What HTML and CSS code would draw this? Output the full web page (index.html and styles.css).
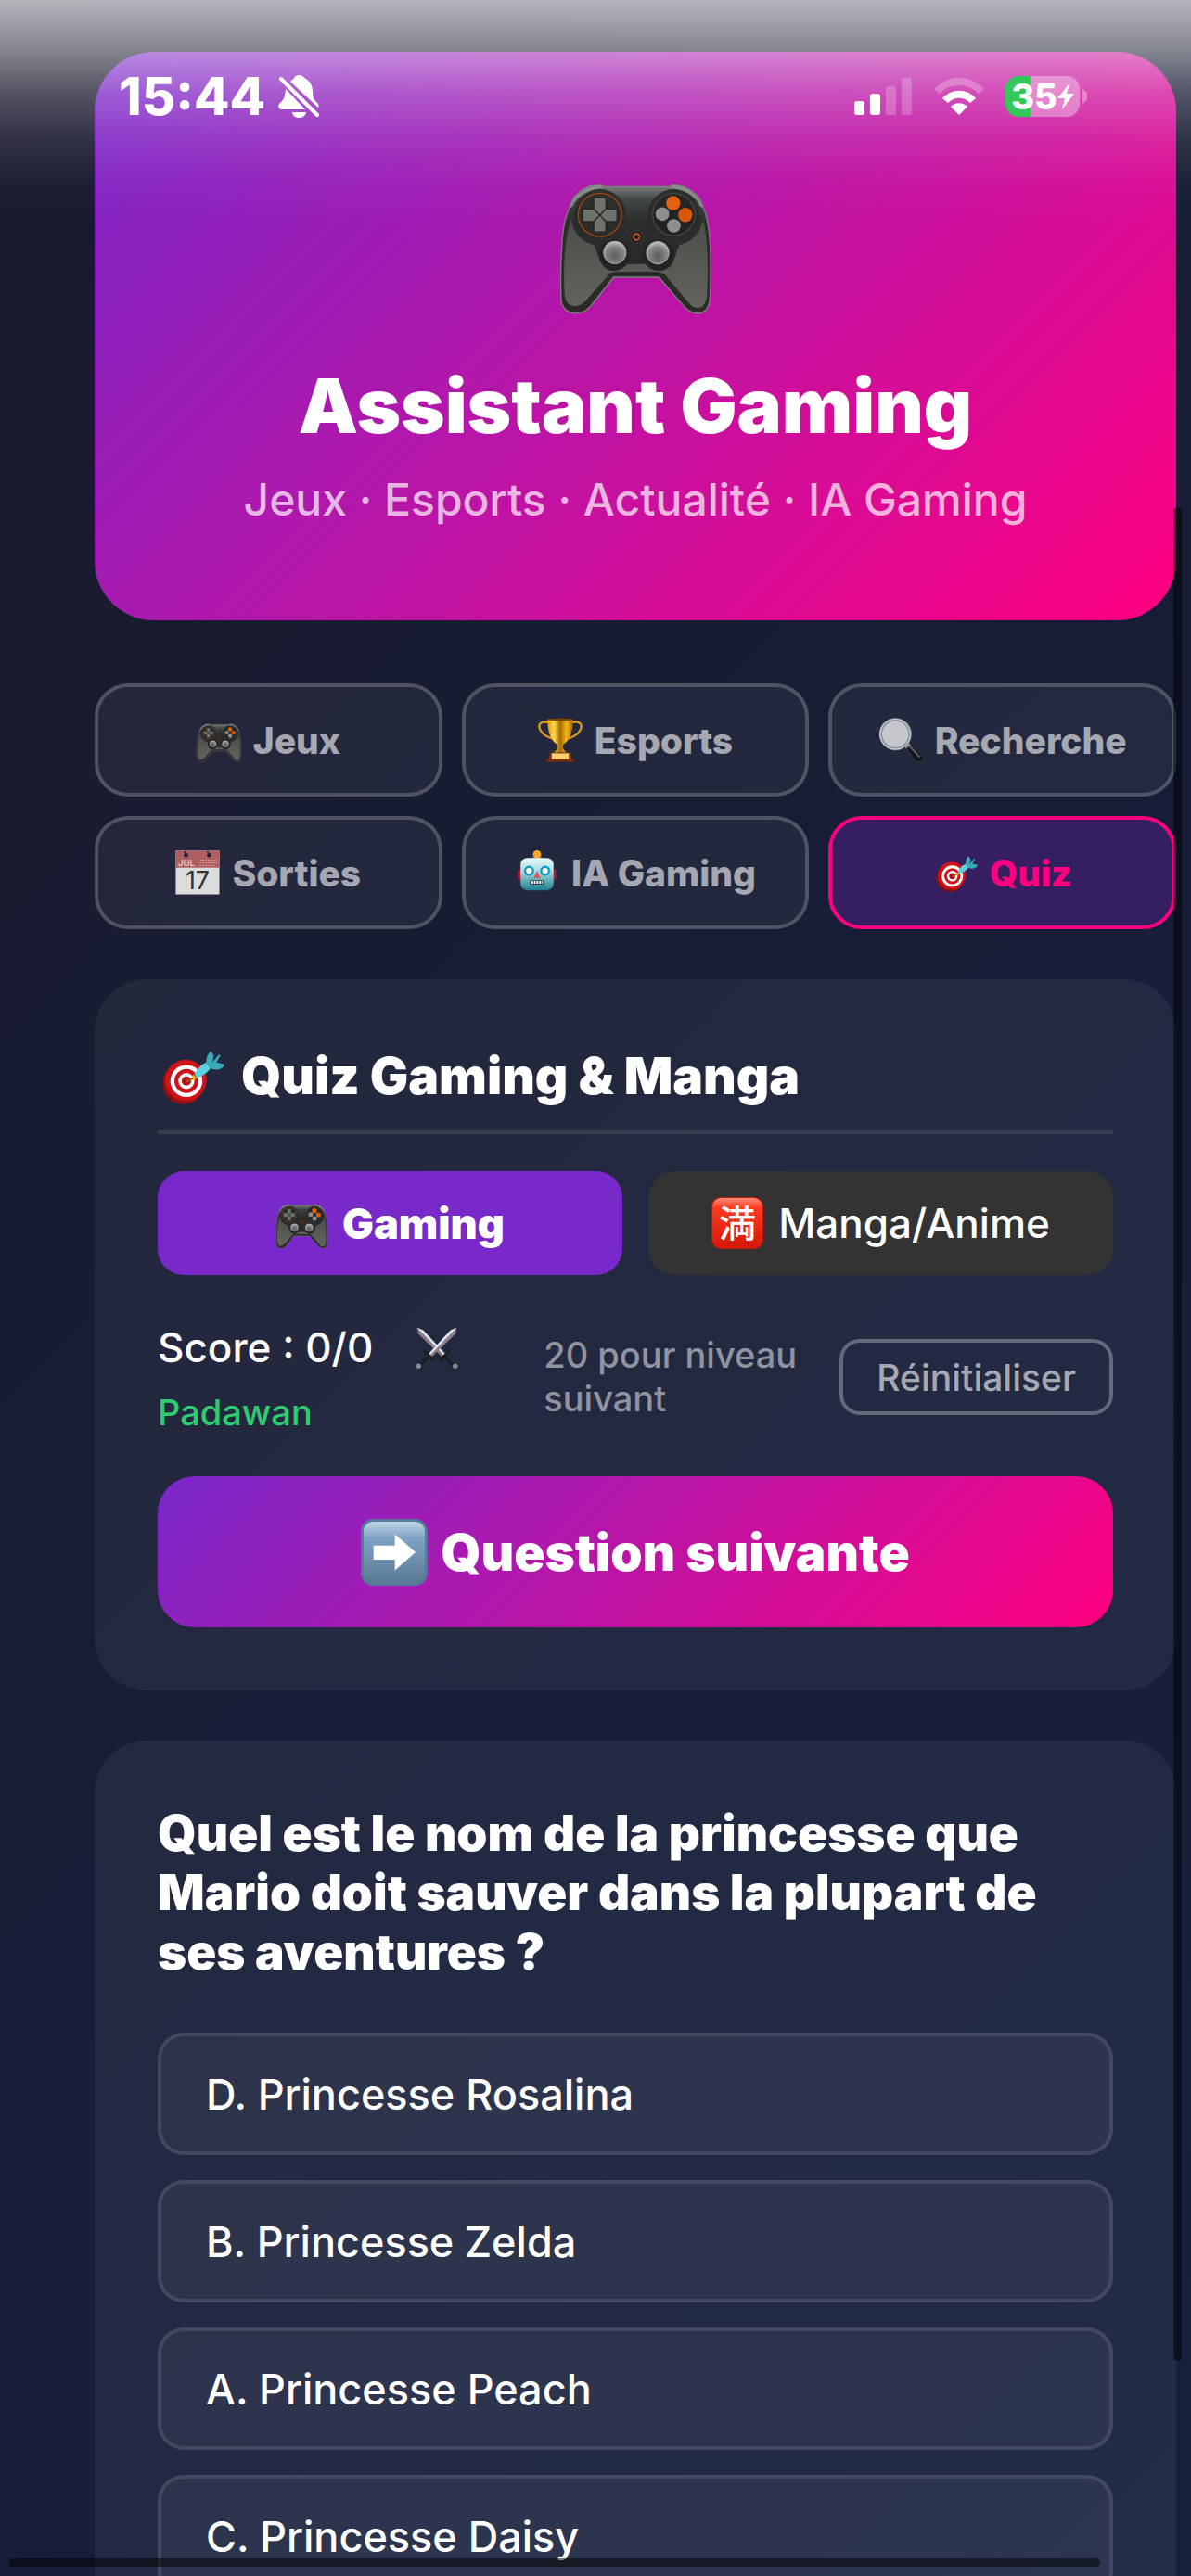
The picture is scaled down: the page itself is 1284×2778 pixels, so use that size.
FILE: index.html
```html
<!DOCTYPE html>
<html lang="fr">
<head>
    <meta charset="UTF-8">
    <meta name="viewport" content="width=device-width, initial-scale=1.0">
    <title>Assistant Gaming</title>
    <link rel="stylesheet" href="styles.css">
</head>
<body>
    <!-- Shared icons -->
    <svg class="sprite" aria-hidden="true">
        <defs>
            <linearGradient id="padBody" x1="0" y1="0" x2="0" y2="1">
                <stop offset="0" stop-color="#7c8480"/>
                <stop offset="0.12" stop-color="#3f4444"/>
                <stop offset="0.3" stop-color="#2b2c2b"/>
                <stop offset="1" stop-color="#2a2b28"/>
            </linearGradient>
            <linearGradient id="padGrip" x1="0" y1="0" x2="0" y2="1">
                <stop offset="0" stop-color="#4b4d48"/>
                <stop offset="1" stop-color="#63645e"/>
            </linearGradient>
            <radialGradient id="padStick" cx="0.5" cy="0.65" r="0.6">
                <stop offset="0" stop-color="#585c5b"/>
                <stop offset="0.7" stop-color="#858887"/>
                <stop offset="1" stop-color="#b8bab8"/>
            </radialGradient>
            <linearGradient id="gold" x1="0" y1="0" x2="1" y2="0">
                <stop offset="0" stop-color="#e09a00"/>
                <stop offset="0.25" stop-color="#ffd84f"/>
                <stop offset="0.5" stop-color="#a66a00"/>
                <stop offset="0.75" stop-color="#f2b51c"/>
                <stop offset="1" stop-color="#a86a00"/>
            </linearGradient>
            <linearGradient id="robotFace" x1="0" y1="0" x2="0" y2="1">
                <stop offset="0" stop-color="#e4fbfb"/>
                <stop offset="0.4" stop-color="#a9dde0"/>
                <stop offset="1" stop-color="#1d7f8e"/>
            </linearGradient>
            <linearGradient id="redBadge" x1="0" y1="0" x2="0" y2="1">
                <stop offset="0" stop-color="#ff8f7d"/>
                <stop offset="0.2" stop-color="#fc3a22"/>
                <stop offset="1" stop-color="#d41708"/>
            </linearGradient>
            <linearGradient id="blueBadge" x1="0" y1="0" x2="0" y2="1">
                <stop offset="0" stop-color="#c8d8e6"/>
                <stop offset="0.28" stop-color="#7ea3c5"/>
                <stop offset="1" stop-color="#5a7993"/>
            </linearGradient>
        </defs>

        <symbol id="icon-gamepad" viewBox="0 0 100 100">
            <g transform="translate(0 13) scale(.204) translate(-65 -50)">
                <path d="M97 132 C105 88 145 58 198 54 L205 62 H422 L428 54 C482 60 520 88 530 132 C546 170 553 240 552 300 C552 350 553 400 549 432 C544 465 520 474 500 469 C482 465 470 452 458 438 L386 354 H240 L170 442 C155 462 135 472 112 470 C88 467 72 450 71 425 C68 370 70 300 74 240 C77 190 84 160 97 132 Z" fill="url(#padBody)" stroke="#7d7f7a" stroke-width="4"/>
                <path d="M103 165 C110 220 150 245 178 250 C188 275 190 295 205 315 C220 338 250 340 282 312 H348 C375 340 410 338 428 312 C440 290 440 275 452 250 C490 240 520 215 528 165 C544 230 545 330 541 410 C538 450 515 462 490 445 L405 345 C395 338 388 336 380 336 H248 C240 336 232 338 225 345 L150 430 C120 458 85 450 82 410 C78 330 80 235 103 165 Z" fill="url(#padGrip)"/>
                <path d="M99 130 C108 90 148 62 198 56 L203 66 C155 72 118 95 108 125 Z M528 130 C518 90 480 62 430 56 L424 66 C472 72 508 95 518 125 Z" fill="#858b88"/>
                <circle cx="196" cy="154" r="84" fill="#2a2c2b"/>
                <circle cx="434" cy="154" r="84" fill="#2a2c2b"/>
                <circle cx="196" cy="153" r="70" fill="#2c2d2b" stroke="#9c4515" stroke-width="4"/>
                <circle cx="434" cy="152" r="68" fill="#222322" stroke="#454746" stroke-width="4"/>
                <path d="M176 98 H215 V134 L196 154 L176 134 Z M176 208 H215 V174 L196 154 L176 174 Z M140 134 H176 L196 154 L176 174 H140 Z M251 134 H215 L196 154 L215 174 H251 Z" fill="#6d726b" stroke="#242523" stroke-width="4"/>
                <circle cx="432" cy="115" r="23" fill="#e2610c"/>
                <circle cx="471" cy="153" r="23" fill="#d95609"/>
                <circle cx="397" cy="150" r="22" fill="#8f8f90"/>
                <circle cx="434" cy="188" r="22" fill="#8f8f90"/>
                <circle cx="314" cy="224" r="20" fill="#1d1e1d" stroke="#3b3d3c" stroke-width="3"/>
                <circle cx="314" cy="224" r="10" fill="none" stroke="#d0561a" stroke-width="5"/>
                <circle cx="243" cy="282" r="50" fill="#232422"/>
                <circle cx="383" cy="282" r="50" fill="#232422"/>
                <circle cx="244" cy="274" r="36" fill="url(#padStick)" stroke="#a5a8a6" stroke-width="3"/>
                <circle cx="382" cy="275" r="36" fill="url(#padStick)" stroke="#a5a8a6" stroke-width="3"/>
            </g>
        </symbol>

        <symbol id="icon-trophy" viewBox="0 0 100 100">
            <path d="M28 12 C6 4 -4 16 8 32 C15 42 24 44 33 47 M72 12 C94 4 104 16 92 32 C85 42 76 44 67 47" fill="none" stroke="#d99a1c" stroke-width="5"/>
            <path d="M22 3 H78 C80 32 70 52 57 60 C54 66 56 72 64 78 H36 C44 72 46 66 43 60 C30 52 20 32 22 3 Z" fill="url(#gold)"/>
            <ellipse cx="50" cy="4" rx="28" ry="3" fill="#7a4a00"/>
            <path d="M28 78 H72 L76 95 H24 Z" fill="#8c3a0a"/>
            <rect x="31" y="80" width="38" height="13" fill="#ffcf6e"/>
            <path d="M20 93 H80 L83 99 H17 Z" fill="#7a2a06"/>
        </symbol>

        <symbol id="icon-search" viewBox="0 0 100 100">
            <path d="M60 62 L70 56 L98 88 C99 95 92 99 86 97 Z" fill="#111214"/>
            <path d="M66 63 L70 60 L94 87 L91 90 Z" fill="#5b5e62"/>
            <path d="M56 62 L66 53 L73 61 L62 70 Z" fill="#8b8e92"/>
            <circle cx="38" cy="37" r="33" fill="#c5c7cd" stroke="#8a9099" stroke-width="7"/>
            <circle cx="38" cy="37" r="34" fill="none" stroke="#d8dce2" stroke-width="2"/>
        </symbol>

        <symbol id="icon-robot" viewBox="0 0 100 100">
            <path d="M42 8 H58 L62 20 H38 Z" fill="#6a4b8c"/>
            <circle cx="50" cy="9" r="9" fill="#fbaa1e"/>
            <rect x="7" y="42" width="10" height="25" rx="4" fill="#b3152a"/>
            <rect x="83" y="42" width="10" height="25" rx="4" fill="#b3152a"/>
            <rect x="13" y="17" width="74" height="73" rx="15" fill="url(#robotFace)"/>
            <circle cx="32" cy="46" r="9" fill="#fff" stroke="#129ac4" stroke-width="5"/>
            <circle cx="68" cy="46" r="9" fill="#fff" stroke="#129ac4" stroke-width="5"/>
            <path d="M50 46 L57 62 H43 Z" fill="#e8504d"/>
            <rect x="34" y="67" width="32" height="10" rx="3" fill="#263b40"/>
            <path d="M37 72 H63" stroke="#fff" stroke-width="6" stroke-dasharray="4 2"/>
        </symbol>

        <symbol id="icon-target" viewBox="0 0 100 100">
            <ellipse cx="38" cy="62" rx="31" ry="31" fill="#8e0f14"/>
            <path d="M22 37 L14 44 L50 91 L62 82 Z" fill="#9f1016"/>
            <ellipse cx="42" cy="57" rx="31" ry="31" fill="#d01219"/>
            <ellipse cx="43" cy="58" rx="24" ry="24" fill="#fff"/>
            <ellipse cx="43" cy="58" rx="18" ry="18" fill="#d01219"/>
            <ellipse cx="43" cy="58" rx="12" ry="12" fill="#fff"/>
            <ellipse cx="43" cy="58" rx="7" ry="7" fill="#b01117"/>
            <path d="M43 59 L60 50" stroke="#9a5b0c" stroke-width="3"/>
            <path d="M53 48 L59 54 L52 57 Z" fill="#f0b412"/>
            <path d="M55 48 C60 38 68 31 75 30 L80 37 C76 45 66 51 59 53 Z" fill="#5ad0dc"/>
            <path d="M73 32 C72 24 75 17 80 13 L84 20 L82 30 L92 18 L94 20 L88 30 L100 33 C99 39 91 44 78 39 Z" fill="#37aab6"/>
        </symbol>

        <symbol id="icon-swords" viewBox="0 0 100 100">
            <path d="M4 4 L18 10 L74 70 L66 76 L6 18 Z" fill="#8d7c80"/>
            <path d="M4 4 L18 10 L74 70 L70 73 Z" fill="#d4e8f4"/>
            <path d="M96 4 L82 10 L26 70 L34 76 L94 18 Z" fill="#8d7c80"/>
            <path d="M96 4 L82 10 L26 70 L30 73 Z" fill="#d4e8f4"/>
            <path d="M20 58 L42 80 M80 58 L58 80 M30 72 L9 94 M70 72 L91 94" stroke="#1c1d20" stroke-width="7"/>
            <circle cx="7" cy="94" r="6" fill="#8b8790"/>
            <circle cx="93" cy="94" r="6" fill="#8b8790"/>
        </symbol>

        <symbol id="icon-next" viewBox="0 0 100 100">
            <rect x="2" y="2" width="96" height="96" rx="17" fill="url(#blueBadge)" stroke="#55799a" stroke-width="4"/>
            <path d="M19 40 H51 V23 L82 50 L51 77 V61 H19 Z" fill="#fff"/>
        </symbol>
    </svg>

    <div class="status-bar">
        <div class="status-left">
            <span class="time">15:44</span>
            <svg class="bell" viewBox="0 0 44 46" aria-hidden="true">
                <path d="M13 7 C15 5 16 5 17 3 C19 -1 26 -1 28 3 C34 6 37 11 37 18 C37 25 39 27 42 30 C44 32 44 34 43 35 Z M8 15 L29 37 H4 C0 37 -1 33 2 30 C7 26 7 22 8 15 Z M15 40 H30 C29 48 16 48 15 40 Z" fill="#fff"/>
                <path d="M3 4 L42 43" stroke="#fff" stroke-width="4" stroke-linecap="round"/>
            </svg>
        </div>
        <div class="status-right">
            <svg class="signal" viewBox="0 0 63 40" aria-hidden="true">
                <rect x="0" y="25" width="11" height="15" rx="3" fill="#fff"/>
                <rect x="17" y="17" width="11" height="23" rx="3" fill="#fff"/>
                <rect x="34" y="9" width="11" height="31" rx="3" fill="#fff" opacity=".22"/>
                <rect x="51" y="0" width="11" height="40" rx="3" fill="#fff" opacity=".22"/>
            </svg>
            <svg class="wifi" viewBox="0 0 54 40" aria-hidden="true">
                <path d="M0 12 C15 -4 39 -4 54 12 L48 17 C36 5 18 5 6 17 Z" fill="#fff" opacity=".25"/>
                <path d="M9 22 C19 11 35 11 45 22 L39 27 C32 20 22 20 15 27 Z" fill="#fff"/>
                <path d="M18 31 C23 26 31 26 36 31 L27 40 Z" fill="#fff"/>
            </svg>
            <div class="battery">
                <span class="battery-level">35</span>
                <svg class="bolt" viewBox="0 0 18 28" aria-hidden="true">
                    <path d="M13 0 L0 16 H8 L5 28 L18 11 H10 Z" fill="#fff"/>
                </svg>
            </div>
        </div>
    </div>

    <main class="page">
        <header class="header">
            <svg class="header-icon" aria-hidden="true"><use href="#icon-gamepad"/></svg>
            <h1>Assistant Gaming</h1>
            <p>Jeux · Esports · Actualité · IA Gaming</p>
        </header>

        <nav class="tabs">
            <button class="tab" type="button"><svg class="emoji" aria-hidden="true"><use href="#icon-gamepad"/></svg>Jeux</button>
            <button class="tab" type="button"><svg class="emoji" aria-hidden="true"><use href="#icon-trophy"/></svg>Esports</button>
            <button class="tab" type="button"><svg class="emoji" aria-hidden="true"><use href="#icon-search"/></svg>Recherche</button>
            <button class="tab" type="button">
                <svg class="emoji" viewBox="0 0 100 100" aria-hidden="true">
                    <rect x="1" y="1" width="98" height="98" fill="#dcdcdc"/>
                    <rect x="1" y="1" width="98" height="38" fill="#b05f60"/>
                    <circle cx="24" cy="11" r="5" fill="#22233b"/>
                    <circle cx="76" cy="11" r="5" fill="#22233b"/>
                    <path d="M24 11 L20 2 M76 11 L72 2" stroke="#22233b" stroke-width="3"/>
                    <path d="M55 22 H94 M55 28 H94 M55 34 H88" stroke="#d3a0a0" stroke-width="2" stroke-dasharray="4 2"/>
                    <text class="calendar-month" x="6" y="35">JUL</text>
                    <text class="calendar-day" x="50" y="88">17</text>
                </svg>
                Sorties
            </button>
            <button class="tab" type="button"><svg class="emoji" aria-hidden="true"><use href="#icon-robot"/></svg>IA Gaming</button>
            <button class="tab active" type="button"><svg class="emoji" aria-hidden="true"><use href="#icon-target"/></svg>Quiz</button>
        </nav>

        <section class="card">
            <h2 class="card-title"><svg class="emoji" aria-hidden="true"><use href="#icon-target"/></svg>Quiz Gaming &amp; Manga</h2>

            <div class="themes">
                <button class="theme active" type="button"><svg class="emoji" aria-hidden="true"><use href="#icon-gamepad"/></svg>Gaming</button>
                <button class="theme" type="button">
                    <svg class="emoji" viewBox="0 0 100 100" aria-hidden="true">
                        <rect x="1" y="1" width="98" height="98" rx="17" fill="url(#redBadge)" stroke="#c2160a" stroke-width="2"/>
                        <text class="manga-glyph" x="50" y="77">満</text>
                    </svg>
                    Manga/Anime
                </button>
            </div>

            <div class="score-row">
                <div class="score-block">
                    <div class="score">Score : 0/0 <svg class="emoji" aria-hidden="true"><use href="#icon-swords"/></svg></div>
                    <div class="level">Padawan</div>
                </div>
                <p class="hint">20 pour niveau suivant</p>
                <button class="reset" type="button">Réinitialiser</button>
            </div>

            <button class="next" type="button"><svg class="emoji" aria-hidden="true"><use href="#icon-next"/></svg>Question suivante</button>
        </section>

        <section class="card">
            <h3 class="question">Quel est le nom de la princesse que Mario doit sauver dans la plupart de ses aventures ?</h3>
            <div class="answers">
                <button class="answer" type="button">D. Princesse Rosalina</button>
                <button class="answer" type="button">B. Princesse Zelda</button>
                <button class="answer" type="button">A. Princesse Peach</button>
                <button class="answer" type="button">C. Princesse Daisy</button>
            </div>
        </section>
    </main>

    <div class="top-fade"></div>
    <div class="scrollbar-y"></div>
    <div class="scrollbar-x"></div>
</body>
</html>
```

FILE: styles.css
```css
* {
    box-sizing: border-box;
}

body {
    position: relative;
    height: 100vh;
    margin: 0;
    overflow: hidden;
    font-family: Inter, "Noto Sans CJK JP", sans-serif;
    color: #fff;
    background: linear-gradient(135deg, #1a1a2e 0%, #16213e 100%);
}

h1, h2, h3, p {
    margin: 0;
}

button {
    font-family: inherit;
    color: inherit;
    border: none;
    cursor: pointer;
}

.sprite {
    position: absolute;
    width: 0;
    height: 0;
}

.emoji {
    flex: none;
    width: 48px;
    height: 48px;
    overflow: visible;
}

.calendar-month {
    font-size: 20px;
    font-weight: 500;
    fill: #e8d5d5;
}

.calendar-day {
    font-size: 56px;
    font-weight: 400;
    text-anchor: middle;
    fill: #333;
}

.manga-glyph {
    font-family: "Noto Sans CJK JP", sans-serif;
    font-size: 72px;
    font-weight: 500;
    text-anchor: middle;
    fill: #fff;
}

/* Phone status bar, drawn over the page */
.top-fade {
    position: absolute;
    inset: 0 0 auto 0;
    height: 240px;
    background: linear-gradient(rgba(255,255,255,0.67) 0, rgba(255,255,255,0.46) 56px, rgba(255,255,255,0.25) 100px, rgba(255,255,255,0.1) 150px, rgba(255,255,255,0.02) 200px, rgba(255,255,255,0) 240px);
    pointer-events: none;
}

.status-bar {
    position: absolute;
    inset: 72px 112px auto 128px;
    z-index: 2;
    display: flex;
    justify-content: space-between;
    align-items: center;
    height: 64px;
}

.status-left,
.status-right {
    display: flex;
    align-items: center;
}

.status-left {
    gap: 14px;
}

.status-right {
    gap: 23px;
}

.time {
    font-size: 56px;
    font-weight: 800;
}

.bell {
    width: 44px;
    height: 46px;
}

.signal {
    width: 63px;
    height: 40px;
}

.wifi {
    width: 54px;
    height: 40px;
}

.battery {
    position: relative;
    display: flex;
    align-items: center;
    justify-content: center;
    width: 80px;
    height: 44px;
    margin-right: 8px;
    border-radius: 14px;
    background: linear-gradient(90deg, #34c759 34%, rgba(255,255,255,0.35) 34%);
}

.battery::after {
    content: "";
    position: absolute;
    right: -8px;
    width: 5px;
    height: 14px;
    border-radius: 0 5px 5px 0;
    background: rgba(255,255,255,0.35);
}

.battery-level {
    font-size: 38px;
    font-weight: 800;
}

.bolt {
    width: 18px;
    height: 28px;
}

.page {
    display: flex;
    flex-direction: column;
    height: 100%;
    padding: 56px 16px 0 102px;
    overflow: hidden;
}

.page > * {
    flex: none;
}

.header {
    display: flex;
    flex-direction: column;
    align-items: center;
    padding: 120px 68px 98px;
    border-radius: 64px;
    background: linear-gradient(135deg, #7928ca 0%, #ff0080 100%);
}

.header-icon {
    width: 164px;
    height: 164px;
}

.header h1 {
    margin-top: 50px;
    font-size: 81px;
    font-weight: 900;
    line-height: 96px;
}

.header p {
    margin-top: 21px;
    font-size: 48px;
    font-weight: 500;
    line-height: 64px;
    color: rgba(255,255,255,0.7);
}

.tabs {
    display: grid;
    grid-template-columns: repeat(3, 1fr);
    gap: 21px;
    margin-top: 68px;
}

.tab {
    display: flex;
    align-items: center;
    justify-content: center;
    gap: 13px;
    height: 122px;
    padding: 0;
    border: 4px solid rgba(255,255,255,0.2);
    border-radius: 36px;
    background: rgba(255,255,255,0.05);
    font-size: 39px;
    font-weight: 800;
    color: rgba(255,255,255,0.6);
}

.tab.active {
    border-color: #ff0080;
    background: #361f60;
    color: #ff0080;
}

.card {
    margin-top: 54px;
    padding: 68px;
    border-radius: 56px;
    background: rgba(255,255,255,0.05);
}

.card-title {
    display: flex;
    align-items: center;
    gap: 18px;
    padding-bottom: 23px;
    border-bottom: 4px solid rgba(255,255,255,0.1);
    font-size: 55px;
    font-weight: 900;
    line-height: 72px;
}

.card-title .emoji,
.next .emoji {
    width: 72px;
    height: 72px;
}

.themes {
    display: grid;
    grid-template-columns: 1fr 1fr;
    gap: 28px;
    margin-top: 40px;
}

.theme {
    display: flex;
    align-items: center;
    justify-content: center;
    gap: 16px;
    height: 112px;
    padding: 0;
    border-radius: 28px;
    background: #333;
    font-size: 44px;
    font-weight: 500;
}

.theme.active {
    background: #7928ca;
    font-size: 45px;
    font-weight: 900;
}

.theme .emoji {
    width: 56px;
    height: 56px;
}

.score-row {
    display: flex;
    align-items: center;
    margin-top: 46px;
}

.score {
    display: flex;
    align-items: center;
    gap: 46px;
    font-size: 44px;
    font-weight: 500;
    line-height: 64px;
}

.score .emoji {
    width: 46px;
    height: 46px;
}

.level {
    margin-top: 12px;
    font-size: 38px;
    font-weight: 500;
    line-height: 52px;
    color: #2ecc71;
}

.hint {
    flex: 1;
    margin: 0 32px 0 92px;
    font-size: 38px;
    font-weight: 500;
    line-height: 47px;
    color: rgba(255,255,255,0.5);
}

.reset {
    height: 82px;
    padding: 0 36px;
    border: 4px solid rgba(255,255,255,0.3);
    border-radius: 22px;
    background: none;
    font-size: 39px;
    font-weight: 500;
    color: rgba(255,255,255,0.6);
}

.next {
    display: flex;
    align-items: center;
    justify-content: center;
    gap: 14px;
    width: 100%;
    height: 163px;
    margin-top: 43px;
    border-radius: 40px;
    background: linear-gradient(135deg, #7928ca 0%, #ff0080 100%);
    font-size: 55px;
    font-weight: 900;
}

.question {
    font-size: 53px;
    font-weight: 900;
    line-height: 64px;
}

.answers {
    display: grid;
    gap: 27px;
    margin-top: 55px;
}

.answer {
    height: 132px;
    padding: 0 48px;
    border: 4px solid rgba(255,255,255,0.1);
    border-radius: 28px;
    background: rgba(255,255,255,0.05);
    font-size: 45px;
    font-weight: 500;
    text-align: left;
}

/* Overlay scroll indicators */
.scrollbar-y,
.scrollbar-x {
    position: absolute;
    border-radius: 5px;
    background: rgba(0,0,0,0.5);
}

.scrollbar-y {
    top: 547px;
    right: 10px;
    bottom: 232px;
    width: 9px;
}

.scrollbar-x {
    right: 98px;
    bottom: 10px;
    left: 9px;
    height: 9px;
}
```
